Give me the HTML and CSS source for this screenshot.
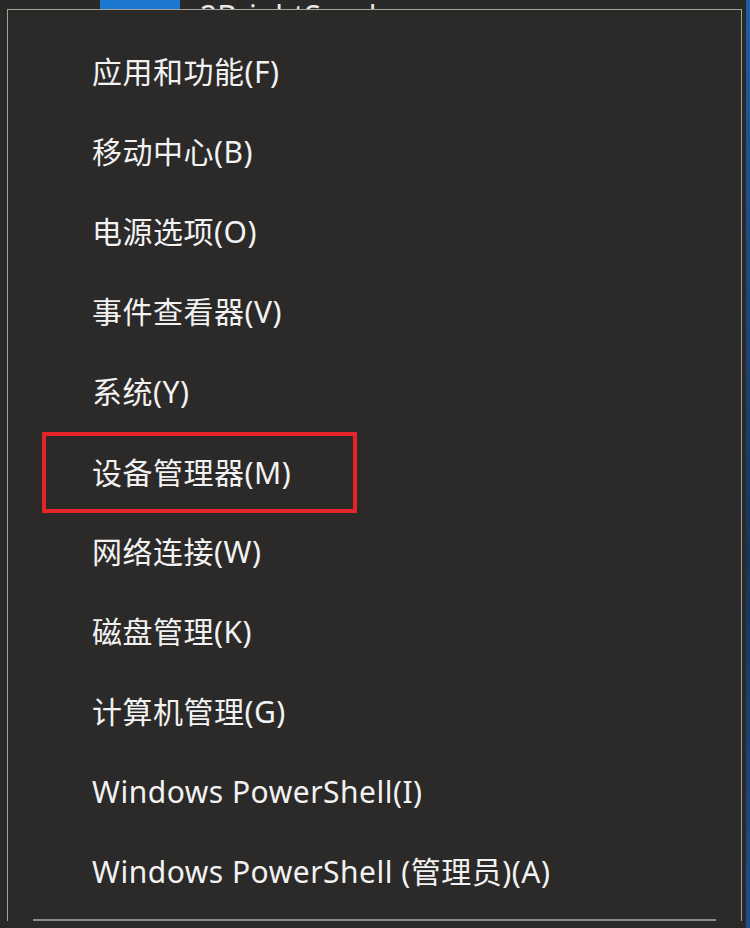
FILE: index.html
```html
<!DOCTYPE html>
<html lang="zh-CN">
<head>
  <meta charset="UTF-8" />
  <title>Win+X 菜单</title>
  <link rel="stylesheet" href="styles.css">
</head>
<body>
  <div class="desktop">
    <!-- bits of the window behind the menu -->
    <div class="task-tile"></div>
    <div class="behind-title">2BrightSpark</div>
    <div class="edge-blue"></div>

    <div class="menu">
      <div class="item">应用和功能(F)</div>
      <div class="item">移动中心(B)</div>
      <div class="item">电源选项(O)</div>
      <div class="item">事件查看器(V)</div>
      <div class="item">系统(Y)</div>
      <div class="item">
        <span class="highlight">设备管理器(M)</span>
      </div>
      <div class="item">网络连接(W)</div>
      <div class="item">磁盘管理(K)</div>
      <div class="item">计算机管理(G)</div>
      <div class="item">Windows PowerShell(I)</div>
      <div class="item">Windows PowerShell (管理员)(A)</div>
      <div class="separator"></div>
    </div>
  </div>
</body>
</html>
```

FILE: styles.css
```css
html, body {
  margin: 0;
  padding: 0;
  height: 100%;
  overflow: hidden;
}
body {
  background-color: #2a2928;
  font-family: "Segoe UI", "Noto Sans", "Noto Sans CJK SC", sans-serif;
}
.desktop {
  position: relative;
  height: 928px;
  overflow: hidden;
}

/* things peeking out behind the menu */
.task-tile {
  position: absolute;
  left: 100px;
  top: 0;
  width: 80px;
  height: 9px;
  background-color: #1a78d0;
}
.behind-title {
  position: absolute;
  left: 200px;
  top: 1px;
  color: #e8e8e8;
  font-size: 30px;
  line-height: 30px;
}
.edge-blue {
  position: absolute;
  right: 0;
  top: 0;
  width: 4px;
  height: 928px;
  background: linear-gradient(#1c5fa8, #14355e 60%, #1c4f90);
}

.menu {
  position: relative;
  margin: 9px 0 0 7px;
  width: 735px;
  box-sizing: border-box;
  border: 1px solid #a3a19e;
  border-bottom: none;
  background-color: #2b2a29;
  padding-top: 22px;
  color: #f2f2f2;
  font-size: 30px;
  letter-spacing: 0.5px;
}
.item {
  height: 80px;
  line-height: 80px;
  padding-left: 84px;
  white-space: nowrap;
}
.item .highlight {
  display: block;
  box-sizing: border-box;
  width: 315px;
  height: 81px;
  margin-left: -50px;
  padding-left: 46px;
  border: 4px solid #e3252a;
  line-height: 73px;
}
.separator {
  height: 2px;
  margin: 7px 25px 0 25px;
  background-color: #8b8a88;
}
```
